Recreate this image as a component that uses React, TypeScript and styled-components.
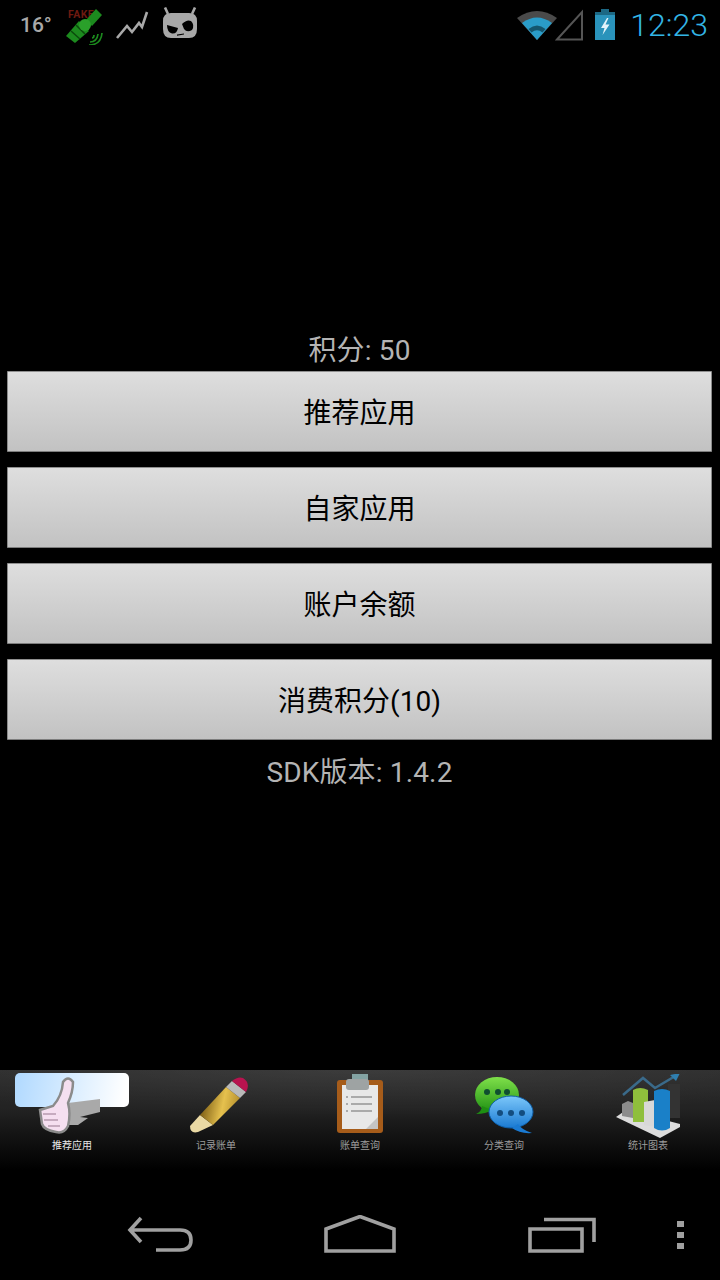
import React from "react";
import styled, { createGlobalStyle } from "styled-components";

const GlobalStyle = createGlobalStyle`
  html, body {
    margin: 0;
    padding: 0;
    background: #000;
  }
  #root {
    width: 720px;
    height: 1280px;
  }
`;

const FONT = `Roboto, "Noto Sans CJK SC", sans-serif`;

const Screen = styled.div`
  width: 720px;
  height: 1280px;
  display: flex;
  flex-direction: column;
  background: #000;
  font-family: ${FONT};
  overflow: hidden;
`;

const StatusBar = styled.div`
  height: 50px;
  flex: none;
  display: flex;
  align-items: center;
  justify-content: space-between;
  padding: 0 12px 0 20px;
`;

const StatusGroup = styled.div`
  display: flex;
  align-items: center;
`;

const Temperature = styled.span`
  font-size: 21px;
  font-weight: 500;
  color: #a8a8a8;
  width: 45px;
`;

const Clock = styled.span`
  font-size: 32px;
  font-weight: 300;
  color: #33b5e5;
  margin-left: 14px;
  line-height: 50px;
`;

const StatusIcon = styled.svg<{ $left?: number; $right?: number }>`
  display: block;
  margin-left: ${(p) => p.$left ?? 0}px;
  margin-right: ${(p) => p.$right ?? 0}px;
`;

const Main = styled.main`
  flex: 1;
  display: flex;
  flex-direction: column;
  justify-content: center;
  padding: 4px 8px 0 7px;
`;

const Label = styled.div<{ $top?: number }>`
  height: 40px;
  margin-top: ${(p) => p.$top ?? 0}px;
  font-size: 28px;
  letter-spacing: 0.15px;
  line-height: 40px;
  color: #b4b4b4;
  text-align: center;
`;

const ButtonList = styled.div`
  display: flex;
  flex-direction: column;
  gap: 15px;
`;

const ActionButton = styled.button`
  height: 81px;
  width: 100%;
  padding: 0 0 2px;
  border: none;
  border-top: 1px solid #8f8f8f;
  border-bottom: 1px solid #7d7d7d;
  border-left: 1px solid #8a8a8a;
  border-right: 1px solid #8a8a8a;
  border-radius: 1px;
  background: linear-gradient(#dedede, #c2c2c2);
  color: #000;
  font-family: ${FONT};
  font-size: 28px;
`;

const TabBar = styled.nav`
  height: 100px;
  flex: none;
  display: grid;
  grid-template-columns: repeat(5, 144px);
  background:
    radial-gradient(ellipse 520px 46px at 360px 0, rgba(255, 255, 255, 0.07), rgba(255, 255, 255, 0) 100%),
    linear-gradient(#2d2d2d 0, #222 40%, #191919 55%, #000 100%);
`;

const Tab = styled.div`
  position: relative;
  display: flex;
  flex-direction: column;
  align-items: center;
  padding-top: 4px;
`;

const TabHighlight = styled.div`
  position: absolute;
  top: 3px;
  left: 15px;
  width: 114px;
  height: 34px;
  border-radius: 5px;
  background: linear-gradient(100deg, #b0d9ff, #fff 95%);
`;

const TabIcon = styled.svg`
  position: relative;
  display: block;
  width: 72px;
  height: 64px;
  filter: blur(0.5px);
`;

const TabLabel = styled.span<{ $active?: boolean }>`
  position: relative;
  margin-top: 1px;
  font-size: 10px;
  line-height: 14px;
  color: ${(p) => (p.$active ? "#e8e8e8" : "#9c9c9c")};
`;

const NavBar = styled.div`
  height: 110px;
  flex: none;
  display: grid;
  grid-template-columns: 198px 204px 148px auto;
  justify-content: start;
  align-items: center;
  padding: 20px 0 0 126px;
  box-sizing: border-box;
`;

const NavIcon = styled.svg`
  display: block;
`;

function SatelliteIcon() {
  return (
    <StatusIcon width="40" height="40" viewBox="0 0 40 40" $right={10}>
      <text x="3" y="13" fontFamily="Roboto, sans-serif" fontSize="10.5" fontWeight="700" letterSpacing="0.4" fill="#6e1a10">
        FAKE
      </text>
      <path d="M1 31 L14 16 L24 26 L10 38 Z" fill="#1c8a1e" />
      <path d="M6 26 L15 34 M11 20 L20 29" stroke="#0b4a0c" strokeWidth="1.5" />
      <path d="M21 15 L31 4 L37 10 L27 21 Z" fill="#1c8a1e" />
      <circle cx="20" cy="20" r="6" fill="#2aa02a" />
      <path d="M25 37 Q32 37 33 29 M27 33 Q29 33 29 30 M24 40 Q36 40 37 28" fill="none" stroke="#1c8a1e" strokeWidth="1.7" />
    </StatusIcon>
  );
}

function ActivityIcon() {
  return (
    <StatusIcon width="36" height="36" viewBox="0 0 36 36" $right={12}>
      <path d="M2 31 L12 19 L17 25 L24 16 L27 20 L32 5" fill="none" stroke="#a8a8a8" strokeWidth="2.6" />
    </StatusIcon>
  );
}

function CyanogenIcon() {
  return (
    <StatusIcon width="36" height="36" viewBox="0 0 36 36">
      <path d="M5 7 L2 0.5 M29 7 L32 0.5" stroke="#a8a8a8" strokeWidth="2.6" />
      <path
        fillRule="evenodd"
        fill="#a8a8a8"
        d="M8 6 H26 Q34 6 34 14 V22 Q34 31 26 31 H8 Q0 31 0 22 V14 Q0 6 8 6 Z M4 18 L15 21 Q14 27 9 26.5 Q4 25 4 18 Z M19 17 Q24 12 28 14 Q32 18 29 23 Q24 26 21 22 Z M14 27.5 L21 26.5 L21 27.5 L14 28.8 Z"
      />
    </StatusIcon>
  );
}

function WifiIcon() {
  return (
    <StatusIcon width="40" height="32" viewBox="0 0 40 32">
      <path d="M20 31 L0 9 Q20 -5 40 9 Z" fill="#4a4a4a" />
      <path d="M20 31 L5 14 Q20 3 35 14 Z" fill="#2a9cc8" />
      <path d="M11.5 20 Q20 13 28.5 20 L25.5 23.5 Q20 19 14.5 23.5 Z" fill="#14566e" />
    </StatusIcon>
  );
}

function SignalIcon() {
  return (
    <StatusIcon width="28" height="32" viewBox="0 0 28 32" $left={-2}>
      <path d="M2 30.5 L27 3 V30.5 Z" fill="none" stroke="#555" strokeWidth="2" />
    </StatusIcon>
  );
}

function BatteryIcon() {
  return (
    <StatusIcon width="22" height="32" viewBox="0 0 22 32" $left={11}>
      <path d="M7 0 H15 V3 H21 V31 H1 V3 H7 Z" fill="#2a93bb" />
      <path d="M7 0 H15 V3 H21 V6 H1 V3 H7 Z" fill="#1c6884" />
      <path d="M13 9 L7 19 H10.5 L8.5 26 L15.5 15.5 H11.5 L14.5 9 Z" fill="#e2f3fa" />
    </StatusIcon>
  );
}

function ThumbIcon() {
  return (
    <TabIcon viewBox="0 0 72 64">
      <path d="M32 29 L64 25 L64 38 L44 43 L52 44 L42 51 L32 51 Z" fill="#a9a9a9" />
      <path
        d="M27 8 Q32 1 37 8 Q37 18 32 29 Q35 40 32 52 Q28 60 20 58 Q8 56 6 50 L4 36 L17 32 Q26 22 27 8 Z"
        fill="#f5dff0"
        stroke="#8b8b8b"
        strokeWidth="2.5"
      />
      <path d="M7 40 H20 M8 46 H22 M12 52 H24" stroke="#b79aae" strokeWidth="1.5" />
    </TabIcon>
  );
}

function PencilIcon() {
  return (
    <TabIcon viewBox="0 0 72 64">
      <defs>
        <linearGradient id="pencilBody" x1="0" y1="1" x2="1" y2="1.2">
          <stop offset="0" stopColor="#8a6a1c" />
          <stop offset="0.45" stopColor="#e6c14e" />
          <stop offset="1" stopColor="#a27c20" />
        </linearGradient>
      </defs>
      <path d="M10 52 L20 41 L33 51 L18 58 Q10 60 10 52 Z" fill="#ead9a4" />
      <path d="M20 41 L46 13 L60 24 L33 51 Z" fill="url(#pencilBody)" />
      <path d="M46 13 L52 7 L66 18 L60 24 Z" fill="#b9b9b9" />
      <path d="M52 7 Q58 2 63 4 Q71 9 66 18 Z" fill="#b8134f" />
    </TabIcon>
  );
}

function ClipboardIcon() {
  return (
    <TabIcon viewBox="0 0 72 64">
      <rect x="13" y="6" width="46" height="53" rx="3" fill="#a65c1a" />
      <rect x="18" y="11" width="36" height="44" fill="#e8e8e8" />
      <path d="M42 55 L54 43 V55 Z" fill="#c4c4c4" />
      <rect x="28" y="0" width="16" height="6" fill="#84a3a3" />
      <rect x="22" y="5" width="23" height="11" rx="3" fill="#9ea3a3" />
      <path d="M27 23 H48 M27 30 H48 M27 37 H48" stroke="#aaa" strokeWidth="2" />
      <path d="M22 23 H24 M22 30 H24 M22 37 H24" stroke="#aaa" strokeWidth="2" />
    </TabIcon>
  );
}

function ChatIcon() {
  return (
    <TabIcon viewBox="0 0 72 64">
      <defs>
        <linearGradient id="chatGreen" x1="0" y1="0" x2="0" y2="1">
          <stop offset="0" stopColor="#7fe04a" />
          <stop offset="1" stopColor="#1e8f12" />
        </linearGradient>
        <linearGradient id="chatBlue" x1="0" y1="0" x2="0" y2="1">
          <stop offset="0" stopColor="#7cc7fa" />
          <stop offset="1" stopColor="#1a7ad2" />
        </linearGradient>
      </defs>
      <ellipse cx="29" cy="21" rx="22" ry="18" fill="url(#chatGreen)" />
      <path d="M14 32 Q14 37 8 40 Q18 40 24 36 Z" fill="#1e8f12" />
      <ellipse cx="43" cy="38" rx="22" ry="16" fill="url(#chatBlue)" stroke="#0f5fa8" strokeWidth="1" />
      <path d="M50 50 Q54 56 64 59 Q52 60 44 54 Z" fill="#1a7ad2" />
      <g fill="#0f4f30">
        <circle cx="19" cy="18" r="3" />
        <circle cx="30" cy="18" r="3" />
        <circle cx="39" cy="18" r="3" />
      </g>
      <g fill="#134d80">
        <circle cx="32" cy="39" r="3" />
        <circle cx="43" cy="39" r="3" />
        <circle cx="54" cy="39" r="3" />
      </g>
    </TabIcon>
  );
}

function ChartIcon() {
  return (
    <TabIcon viewBox="0 0 72 64">
      <rect x="56" y="10" width="12" height="34" fill="#333" />
      <path d="M4 43 L14 36 L68 50 L68 53 L48 64 Z" fill="#dcdcdc" />
      <path d="M10 42 V30 L16 27 L21 29 V44 Z" fill="#8c8c8c" />
      <path d="M21 48 V16 Q28 12 36 16 V48 Z" fill="#8fbf3c" />
      <path d="M32 51 V28 L43 26 V53 Z" fill="#d8d8d8" />
      <path d="M42 54 V17 Q50 13 58 17 V54 Q50 59 42 54 Z" fill="#1a80c8" />
      <path d="M11 21 L31 4 L43 14 L65 1" fill="none" stroke="#3a6a8a" strokeWidth="2.5" />
      <path d="M58 1 L68 -1 L64 7 Z" fill="#2f7fb0" />
    </TabIcon>
  );
}

const TABS = [
  { label: "推荐应用", icon: <ThumbIcon />, active: true },
  { label: "记录账单", icon: <PencilIcon /> },
  { label: "账单查询", icon: <ClipboardIcon /> },
  { label: "分类查询", icon: <ChatIcon /> },
  { label: "统计图表", icon: <ChartIcon /> },
];

const ACTIONS = ["推荐应用", "自家应用", "账户余额", "消费积分(10)"];

export default function App() {
  return (
    <Screen>
      <GlobalStyle />
      <StatusBar>
        <StatusGroup>
          <Temperature>16°</Temperature>
          <SatelliteIcon />
          <ActivityIcon />
          <CyanogenIcon />
        </StatusGroup>
        <StatusGroup>
          <WifiIcon />
          <SignalIcon />
          <BatteryIcon />
          <Clock>12:23</Clock>
        </StatusGroup>
      </StatusBar>
      <Main>
        <Label>积分: 50</Label>
        <ButtonList>
          {ACTIONS.map((action) => (
            <ActionButton key={action}>{action}</ActionButton>
          ))}
        </ButtonList>
        <Label $top={13}>SDK版本: 1.4.2</Label>
      </Main>
      <TabBar>
        {TABS.map((tab) => (
          <Tab key={tab.label}>
            {tab.active && <TabHighlight />}
            {tab.icon}
            <TabLabel $active={tab.active}>{tab.label}</TabLabel>
          </Tab>
        ))}
      </TabBar>
      <NavBar>
        <NavIcon width="68" height="40" viewBox="0 0 68 40">
          <path d="M15 3 L4 15 L15 27 M4 15 H54 Q65 15 65 25 Q65 35 54 35 H30" fill="none" stroke="#a0a0a0" strokeWidth="3.6" />
        </NavIcon>
        <NavIcon width="72" height="40" viewBox="0 0 72 40">
          <path d="M2 14 L36 1.5 L70 14 V36 H2 Z" fill="none" stroke="#a0a0a0" strokeWidth="3.6" />
        </NavIcon>
        <NavIcon width="68" height="40" viewBox="0 0 68 40">
          <path d="M16 4.5 H66 V27 M2 14 H54 V36 H2 Z" fill="none" stroke="#a0a0a0" strokeWidth="3.6" />
        </NavIcon>
        <NavIcon width="10" height="32" viewBox="0 0 10 32">
          <path d="M1 2 H8 V8 H1 Z M1 13 H8 V19 H1 Z M1 24 H8 V30 H1 Z" fill="#a0a0a0" />
        </NavIcon>
      </NavBar>
    </Screen>
  );
}
